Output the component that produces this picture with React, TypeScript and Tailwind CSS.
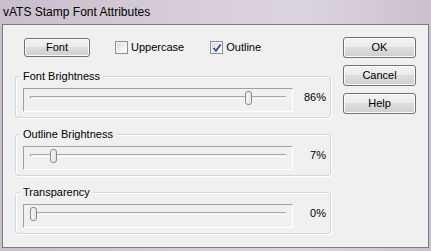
import React from 'react';

const font = { fontFamily: '"Liberation Sans", Arial, sans-serif' };

function Button({ label, className = '' }: { label: string; className?: string }) {
  return (
    <div
      className={`flex items-center justify-center rounded-[3px] border border-[#707070] bg-[linear-gradient(#f2f2f2,#ebebeb_45%,#dddddd_50%,#cfcfcf)] text-[11px] text-black shadow-[inset_0_0_0_1px_#fcfcfc] ${className}`}
    >
      {label}
    </div>
  );
}

function Checkbox({ label, checked }: { label: string; checked?: boolean }) {
  return (
    <div className="flex items-center gap-[3px] text-[11px] text-black">
      <div className="flex h-[13px] w-[13px] items-center justify-center border border-[#8e8f8f] bg-white">
        <div className="relative flex h-[11px] w-[11px] items-center justify-center border border-[#f4f4f4] bg-[linear-gradient(135deg,#dcdcdc,#ffffff)]">
          {checked && (
            <svg width="10" height="10" viewBox="0 0 10 10" className="absolute">
              <path d="M1.5 5 L4 7.8 L8.6 1.5" fill="none" stroke="#2f4d9b" strokeWidth="1.8" />
            </svg>
          )}
        </div>
      </div>
      <span>{label}</span>
    </div>
  );
}

function Group({ label, value, thumbX }: { label: string; value: string; thumbX: number }) {
  return (
    <div className="relative h-[42px] rounded-[3px] border border-[#d0d8dd] shadow-[inset_1px_1px_0_#ffffff,1px_1px_0_#ffffff]">
      <span className="absolute -top-[8px] left-[4px] bg-[#f0f0f0] px-[3px] text-[11px] leading-[14px] text-black">
        {label}
      </span>
      <div className="flex items-start pl-[7px] pt-[11px]">
        <div className="relative h-[24px] w-[270px] border border-[#a0a0a0] border-b-white border-r-white">
          <div className="ml-[6px] mr-[6px] mt-[7px] h-[3px] border-l border-t border-[#a8a8a8] border-b border-b-white" />
          <div
            className="absolute top-[2px] h-[14px] w-[7px] rounded-[3px] border border-[#8a8a8a] bg-[linear-gradient(90deg,#f6f6f6,#e4e4e4)]"
            style={{ left: thumbX }}
          />
        </div>
        <span className="ml-auto mr-[4px] mt-[2px] text-[11px] leading-[14px] text-black">{value}</span>
      </div>
    </div>
  );
}

export default function App() {
  return (
    <div
      className="flex h-[251px] w-[431px] flex-col bg-[linear-gradient(90deg,#c9bfcc,#d6ccd8_40%,#dcd4de_70%,#cbc1ce)]"
      style={font}
    >
      <div className="flex h-[24px] items-center pl-[3px] text-[12px] text-black">vATS Stamp Font Attributes</div>
      <div className="mx-[2px] flex h-[224px] border border-[#7d7886] bg-[#f0f0f0]">
        <div className="ml-[12px] mt-[12px] flex w-[316px] flex-col">
          <div className="flex h-[21px] items-center">
            <Button label="Font" className="ml-[9px] h-[19px] w-[66px]" />
            <div className="ml-[25px]">
              <Checkbox label="Uppercase" />
            </div>
            <div className="ml-[26px]">
              <Checkbox label="Outline" checked />
            </div>
          </div>
          <div className="mt-[18px] flex flex-col gap-[16px]">
            <Group label="Font Brightness" value="86%" thumbX={221} />
            <Group label="Outline Brightness" value="7%" thumbX={26} />
            <Group label="Transparency" value="0%" thumbX={6} />
          </div>
        </div>
        <div className="ml-[12px] mt-[12px] flex flex-col gap-[7px]">
          <Button label="OK" className="h-[21px] w-[73px]" />
          <Button label="Cancel" className="h-[21px] w-[73px]" />
          <Button label="Help" className="h-[21px] w-[73px]" />
        </div>
      </div>
    </div>
  );
}
